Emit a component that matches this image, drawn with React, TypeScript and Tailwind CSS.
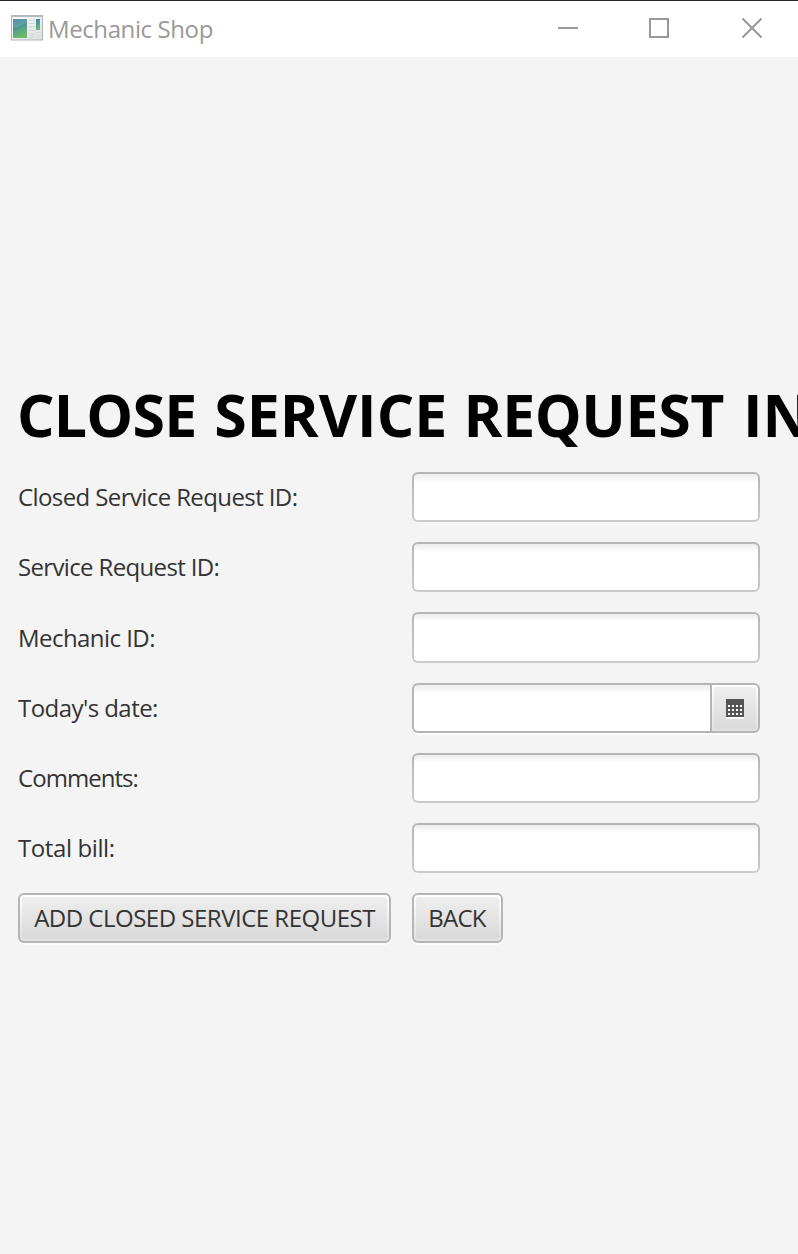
const labelText =
  'font-["Open_Sans","Noto_Sans",sans-serif] text-[24px] leading-[32px] text-[#333333] whitespace-nowrap';

const fieldFrame =
  "rounded-[6px] bg-linear-to-b from-[#b5b5b5] to-[#cbcbcb] p-[2px]";

const fieldInner =
  "block h-full w-full rounded-[4px] bg-linear-to-b from-[#ececec] to-white to-[8px] outline-none";

const buttonFrame =
  "h-[50px] rounded-[6px] bg-[#b5b5b5] p-[2px] shadow-[0_2px_0_#fbfbfb]";

const buttonHighlight =
  "h-full rounded-[4px] bg-linear-to-b from-white to-[#e1e1e1] p-[2px]";

const buttonFace =
  "flex h-full items-center justify-center rounded-[3px] bg-linear-to-b from-[#eeeeee] to-[#d9d9d9]";

function AppIcon() {
  return (
    <svg width="32" height="27" viewBox="0 0 32 27">
      <defs>
        <linearGradient id="screen" x1="0" y1="0" x2="0.3" y2="1">
          <stop offset="0" stopColor="#4580ab" />
          <stop offset="0.5" stopColor="#4c9a90" />
          <stop offset="1" stopColor="#6cb96a" />
        </linearGradient>
        <linearGradient id="frame" x1="0" y1="0" x2="1" y2="1">
          <stop offset="0" stopColor="#fdfdfd" />
          <stop offset="1" stopColor="#dcdee0" />
        </linearGradient>
      </defs>
      <rect x="0.5" y="1.5" width="31" height="24.500" fill="url(#frame)" stroke="#b0b4b7" />
      <rect x="0" y="1" width="32" height="2" fill="#b3b9be" />
      <rect x="2" y="5" width="14" height="19" fill="url(#screen)" />
      <path d="M2 14Q9 13 16 8V5H2Z" fill="#ffffff" opacity="0.1" />
      <path d="M18 6h6M18 9.500h6M18 13h6M18 16.500h6M18 20h6M18 23h5" stroke="#d0d3d5" strokeWidth="1.2" />
      <rect x="25" y="5" width="4" height="11" fill="url(#screen)" />
      <path d="M25 18.500h4M25 22h4" stroke="#d9dbdd" />
    </svg>
  );
}

function CalendarIcon() {
  const cells = [0, 1, 2].flatMap((row) => [0, 1, 2, 3].map((col) => [2 + col * 4, 6 + row * 4]));
  return (
    <svg className="mt-[2px]" width="18" height="20" viewBox="0 0 18 20" shapeRendering="crispEdges">
      <rect y="2" width="18" height="18" fill="#ffffff" />
      <rect width="18" height="18" fill="#555555" />
      {cells.map(([x, y]) => (
        <rect key={`${x}-${y}`} x={x} y={y} width="2" height="2" fill="#ffffff" />
      ))}
    </svg>
  );
}

function TitleBar() {
  return (
    <header className="flex h-[57px] shrink-0 items-start border-t border-[#252525] bg-white pl-[11px]">
      <div className="mt-[13px]">
        <AppIcon />
      </div>
      <span className='ml-[5px] mt-[12px] flex-1 font-["Open_Sans","Noto_Sans",sans-serif] text-[24px] leading-[32px] whitespace-nowrap text-[#999999]'>
        <span className="tracking-[-0.4px]">Mechanic Shop</span>
      </span>
      <svg className="mr-[34px] mt-[16px]" width="206" height="22" viewBox="0 0 206 22">
        <path d="M0 11h20" stroke="#999999" strokeWidth="2" />
        <path d="M92 2h18v18h-18z" fill="none" stroke="#999999" strokeWidth="2" />
        <path d="M184.500 1.500l19 19M203.500 1.500l-19 19" stroke="#999999" strokeWidth="2" />
      </svg>
    </header>
  );
}

function TextField({ label, tracking, tall }: { label: string; tracking: string; tall?: boolean }) {
  return (
    <label className="flex items-center">
      <span className={`w-[394px] ${labelText} ${tracking}`}>{label}</span>
      <span className={`w-[348px] ${tall ? "h-[51px]" : "h-[50px]"} ${fieldFrame}`}>
        <input className={fieldInner} />
      </span>
    </label>
  );
}

function DateField() {
  return (
    <div className="flex items-center">
      <span className={`w-[394px] ${labelText} tracking-[-0.55px]`}>Today's date:</span>
      <div className="flex h-[50px] w-[348px] gap-[2px] rounded-[6px] bg-[#b5b5b5] p-[2px] shadow-[0_2px_0_#fbfbfb]">
        <input className="w-[296px] rounded-l-[4px] bg-linear-to-b from-[#ececec] to-white to-[8px] outline-none" />
        <button className="flex-1 rounded-r-[4px] bg-linear-to-b from-white to-[#e1e1e1] p-[2px]">
          <span className="flex h-full items-center justify-center rounded-r-[3px] bg-linear-to-b from-[#eeeeee] to-[#d9d9d9]">
            <CalendarIcon />
          </span>
        </button>
      </div>
    </div>
  );
}

export default function App() {
  return (
    <div className="flex h-[1254px] w-[798px] flex-col overflow-hidden bg-[#f4f4f4]">
      <TitleBar />
      <main className="flex flex-col pl-[18px] pt-[320px]">
        <h1 className='-ml-[1px] h-[95px] font-["Open_Sans","Noto_Sans",sans-serif] text-[59px] leading-[74px] font-bold whitespace-nowrap text-black'>
          <span className="mr-[2.5px] tracking-[-0.8px]">CLOSE</span>{" "}
          <span className="mr-[1px]">SERVICE</span>{" "}
          <span className="mr-[3.5px] tracking-[-0.4px]">REQUEST</span> INFO
        </h1>
        <div className="flex flex-col gap-[20px]">
          <TextField label="Closed Service Request ID:" tracking="tracking-[-0.6px]" />
          <TextField label="Service Request ID:" tracking="tracking-[-0.65px]" />
          <TextField label="Mechanic ID:" tracking="tracking-[-0.55px]" tall />
          <DateField />
          <TextField label="Comments:" tracking="tracking-[-0.95px]" />
          <TextField label="Total bill:" tracking="tracking-[-0.4px]" />
          <div className="flex gap-[21px]">
            <button className={`w-[373px] ${buttonFrame}`}>
              <div className={buttonHighlight}>
                <div className={buttonFace}>
                  <span className={`${labelText} tracking-[-0.5px]`}>ADD CLOSED SERVICE REQUEST</span>
                </div>
              </div>
            </button>
            <button className={`w-[91px] ${buttonFrame}`}>
              <div className={buttonHighlight}>
                <div className={buttonFace}>
                  <span className={`${labelText} mr-[1px] tracking-[-0.75px]`}>BACK</span>
                </div>
              </div>
            </button>
          </div>
        </div>
      </main>
    </div>
  );
}
